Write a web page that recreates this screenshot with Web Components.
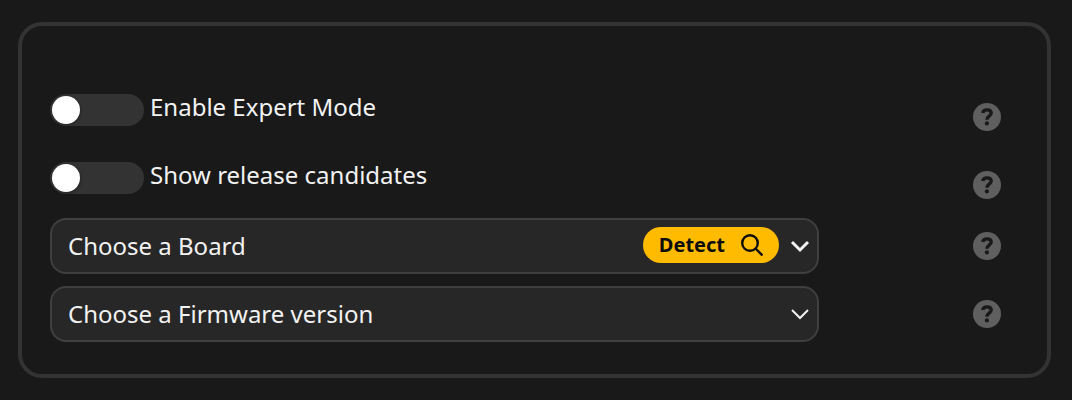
<!DOCTYPE html>
<html lang="en">
<head>
<meta charset="utf-8">
<title>Firmware options</title>
<style>
  body {
    margin: 0;
    background: #191919;
    color: #f2f2f2;
    font: 24px/32px "Noto Sans", "Open Sans", sans-serif;
  }
</style>
</head>
<body>
<firmware-options></firmware-options>

<script>
class BaseElement extends HTMLElement {
  render(html) {
    this.attachShadow({ mode: "open" }).innerHTML =
      `<style>*, *::before { box-sizing: border-box; }</style>${html}`;
  }
}

class HelpButton extends BaseElement {
  connectedCallback() {
    this.render(`
      <style>
        :host { display: block; }
        button { display: block; width: 28px; height: 28px; padding: 0; border: 0; background: none; color: #5f5f5f; cursor: pointer; }
        svg { display: block; width: 28px; height: 28px; }
      </style>
      <button type="button" aria-label="Help">
        <svg viewBox="0 0 28 28" aria-hidden="true">
          <circle cx="14" cy="14" r="14" fill="currentColor"/>
          <path d="M9.8 10C10 8 11.6 6.9 14 6.9c2.6 0 4.2 1.2 4.2 3.2 0 3.1-4.3 3.1-4.3 6.6" fill="none" stroke="#191919" stroke-width="3.4"/>
          <circle cx="13.9" cy="20.4" r="2.1" fill="#191919"/>
        </svg>
      </button>`);
  }
}

class ToggleSwitch extends BaseElement {
  connectedCallback() {
    this.render(`
      <style>
        :host { display: block; }
        label { display: flex; align-items: flex-start; gap: 6px; cursor: pointer; }
        input {
          appearance: none; display: flex; align-items: center; flex: none;
          width: 94px; height: 32px; margin: 0; padding: 2px;
          border-radius: 16px; background: #333;
        }
        input::before {
          content: ""; width: 28px; height: 28px; border-radius: 50%;
          background: #fff; box-shadow: 1px 1px 3px rgb(0 0 0 / 30%);
        }
        input:checked { justify-content: flex-end; background: #ffbb00; }
        span { line-height: 26px; }
      </style>
      <label><input type="checkbox" role="switch"><span><slot></slot></span></label>`);
  }
}

class ChoiceBox extends BaseElement {
  connectedCallback() {
    const text = this.getAttribute("placeholder");
    const weight = this.hasAttribute("bold") ? 3 : 2;
    this.render(`
      <style>
        :host { display: grid; align-items: center; }
        select {
          grid-area: 1 / 1; appearance: none; width: 100%; height: 56px; margin: 0; padding: 0 48px 0 16px;
          border: 2px solid #3f3f3f; border-radius: 16px; background: #272727; color: inherit; font: inherit;
        }
        .tools {
          grid-area: 1 / 1; justify-self: end; display: flex; align-items: center; gap: 11px;
          padding-right: 9px; pointer-events: none; z-index: 1;
        }
        ::slotted(*) { pointer-events: auto; }
        svg { display: block; width: 20px; height: 14px; }
      </style>
      <select aria-label="${text}"><option>${text}</option></select>
      <div class="tools">
        <slot></slot>
        <svg viewBox="0 0 20 14" fill="none" stroke="currentColor" stroke-width="${weight}" aria-hidden="true"><path d="M2 3l8 8 8-8"/></svg>
      </div>`);
  }
}

class DetectButton extends BaseElement {
  connectedCallback() {
    this.render(`
      <style>
        :host { display: block; padding-bottom: 2px; }
        button {
          display: flex; align-items: center; gap: 16px; height: 36px; padding: 0 16px;
          border: 0; border-radius: 18px; background: #ffbb00; color: #0d0d0d;
          font: bold 20px/36px "Noto Sans", "Open Sans", sans-serif; cursor: pointer;
        }
        svg { display: block; width: 22px; height: 22px; }
      </style>
      <button type="button"><slot></slot>
        <svg viewBox="0 0 22 22" fill="none" stroke="currentColor" stroke-width="2.4" aria-hidden="true"><circle cx="9" cy="9" r="7.8"/><path d="M14.5 14.5l7 7"/></svg>
      </button>`);
  }
}

class OptionRow extends BaseElement {
  connectedCallback() {
    this.render(`
      <style>
        :host { display: grid; grid-template-columns: minmax(0, 1fr) 28px; column-gap: 154px; align-items: center; min-height: 56px; }
        :host([switch]) help-button { padding-top: 14px; }
      </style>
      <slot></slot><help-button></help-button>`);
  }
}

class FirmwareOptions extends BaseElement {
  connectedCallback() {
    this.render(`
      <style>
        :host { display: block; padding: 22px 21px 22px 18px; }
        section {
          display: grid; gap: 12px; padding: 56px 46px 32px 28px;
          border: 4px solid #333; border-radius: 24px;
        }
      </style>
      <section aria-label="Firmware options">
        <option-row switch><toggle-switch>Enable Expert Mode</toggle-switch></option-row>
        <option-row switch><toggle-switch>Show release candidates</toggle-switch></option-row>
        <option-row><choice-box bold placeholder="Choose a Board"><detect-button>Detect</detect-button></choice-box></option-row>
        <option-row><choice-box placeholder="Choose a Firmware version"></choice-box></option-row>
      </section>`);
  }
}

customElements.define("help-button", HelpButton);
customElements.define("toggle-switch", ToggleSwitch);
customElements.define("choice-box", ChoiceBox);
customElements.define("detect-button", DetectButton);
customElements.define("option-row", OptionRow);
customElements.define("firmware-options", FirmwareOptions);
</script>
</body>
</html>
